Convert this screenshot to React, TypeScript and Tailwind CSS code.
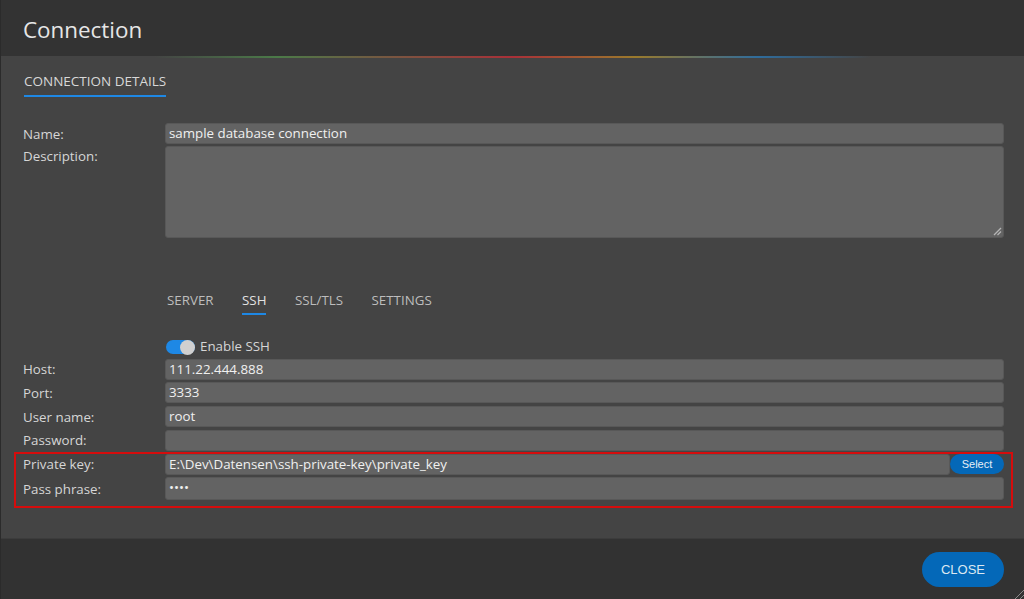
const labelClass = 'w-[142px] shrink-0 text-[13.33px] leading-5 text-[#d6d6d6]';
const fieldClass = 'flex-1 h-[21px] min-w-0 rounded-[3px] border border-[#585858] bg-[#636363] px-[3px] text-[13.33px] leading-[19px] text-[#f0f0f0] outline-none';

function Row({ label, value, className = '', children }: { label: string; value?: string; className?: string; children?: React.ReactNode }) {
  return (
    <div className={`flex items-center ${className}`}>
      <label className={labelClass}>{label}</label>
      <div className={fieldClass}>{value}</div>
      {children}
    </div>
  );
}

export default function App() {
  const tabs = ['SERVER', 'SSH', 'SSL/TLS', 'SETTINGS'];

  return (
    <div className="relative flex h-[599px] w-[1024px] flex-col overflow-hidden border-l border-[#2b2b2b] bg-[#444444] font-['Open_Sans',sans-serif]">
      <header className="h-[56px] shrink-0 bg-[#333333] pl-[22px] pt-[14px] text-[22.4px] leading-[32px] text-[#e6e6e6]">
        Connection
      </header>
      <div className="h-[2px] shrink-0 bg-[linear-gradient(90deg,#444444_15%,#4b7a48_27%,#a93038_50%,#9a7a2c_62%,#2f6c9c_74%,#444444_85%)]" />

      <main className="flex-1 pl-[22px] pr-[20px] pt-[10px]">
        <div className="ml-px inline-block border-b-2 border-[#1e88e5] pb-[4px] text-[13.5px] leading-[20px] text-[#d8d8d8]">
          CONNECTION DETAILS
        </div>

        <div className="mt-[26px] flex flex-col gap-[2px]">
          <Row label="Name:" value="sample database connection" />
          <div className="flex items-start">
            <label className={labelClass}>Description:</label>
            <div className="relative h-[92px] flex-1 rounded-[3px] border border-[#585858] bg-[#636363]">
              <svg className="absolute bottom-[1px] right-[1px]" width="10" height="10" viewBox="0 0 10 10">
                <path d="M2 9 L9 2 M5.5 9 L9 5.5" stroke="#b5b5b5" strokeWidth="1.3" fill="none" />
              </svg>
            </div>
          </div>
        </div>

        <nav className="ml-[144px] mt-[52px] flex gap-[28.5px] text-[13.33px] leading-[20px]">
          {tabs.map((tab) => (
            <div
              key={tab}
              className={tab === 'SSH' ? 'border-b-2 border-[#1e88e5] pb-[3px] text-[#e2e2e2]' : 'pb-[5px] text-[#bdbdbd]'}
            >
              {tab}
            </div>
          ))}
        </nav>

        <div className="ml-[143px] mt-[22px] flex h-[20px] items-center gap-[5px] text-[13.33px] text-[#d6d6d6]">
          <div className="relative h-[14px] w-[29px] rounded-full bg-[#1e88e5]">
            <div className="absolute right-0 top-[-0.5px] h-[15px] w-[15px] rounded-full bg-[#d0d0d0]" />
          </div>
          Enable SSH
        </div>

        <div className="mt-[1.5px] flex flex-col gap-[2.75px]">
          <Row label="Host:" value="111.22.444.888" />
          <Row label="Port:" value="3333" />
          <Row label="User name:" value="root" />
          <Row label="Password:" />
          <Row label="Private key:" value="E:\Dev\Datensen\ssh-private-key\private_key">
            <button className="h-[20px] w-[54px] shrink-0 rounded-full bg-[#0468b8] font-['Liberation_Sans',sans-serif] text-[11px] text-[#e6eef6]">
              Select
            </button>
          </Row>
          <Row label="Pass phrase:" value="••••" className="[&>div]:h-[23px]" />
        </div>
      </main>

      <footer className="flex h-[61px] shrink-0 items-start justify-end border-t border-[#3c3c3c] bg-[#323232] pr-[20px] pt-[13px]">
        <button className="h-[35px] w-[82px] rounded-full bg-[#0468b8] font-['Liberation_Sans',sans-serif] text-[13px] text-[#dce8f2]">
          CLOSE
        </button>
      </footer>

      <svg className="absolute bottom-0 right-0" width="10" height="10" viewBox="0 0 10 10">
        <path d="M1 10 L10 1 M6 10 L10 6" stroke="#8a8a8a" strokeWidth="1" fill="none" />
      </svg>

      {/* red annotation box around the key fields */}
      <div className="pointer-events-none absolute left-[13px] top-[452px] h-[56px] w-[999px] border-2 border-[#d50c0c]" />
    </div>
  );
}
